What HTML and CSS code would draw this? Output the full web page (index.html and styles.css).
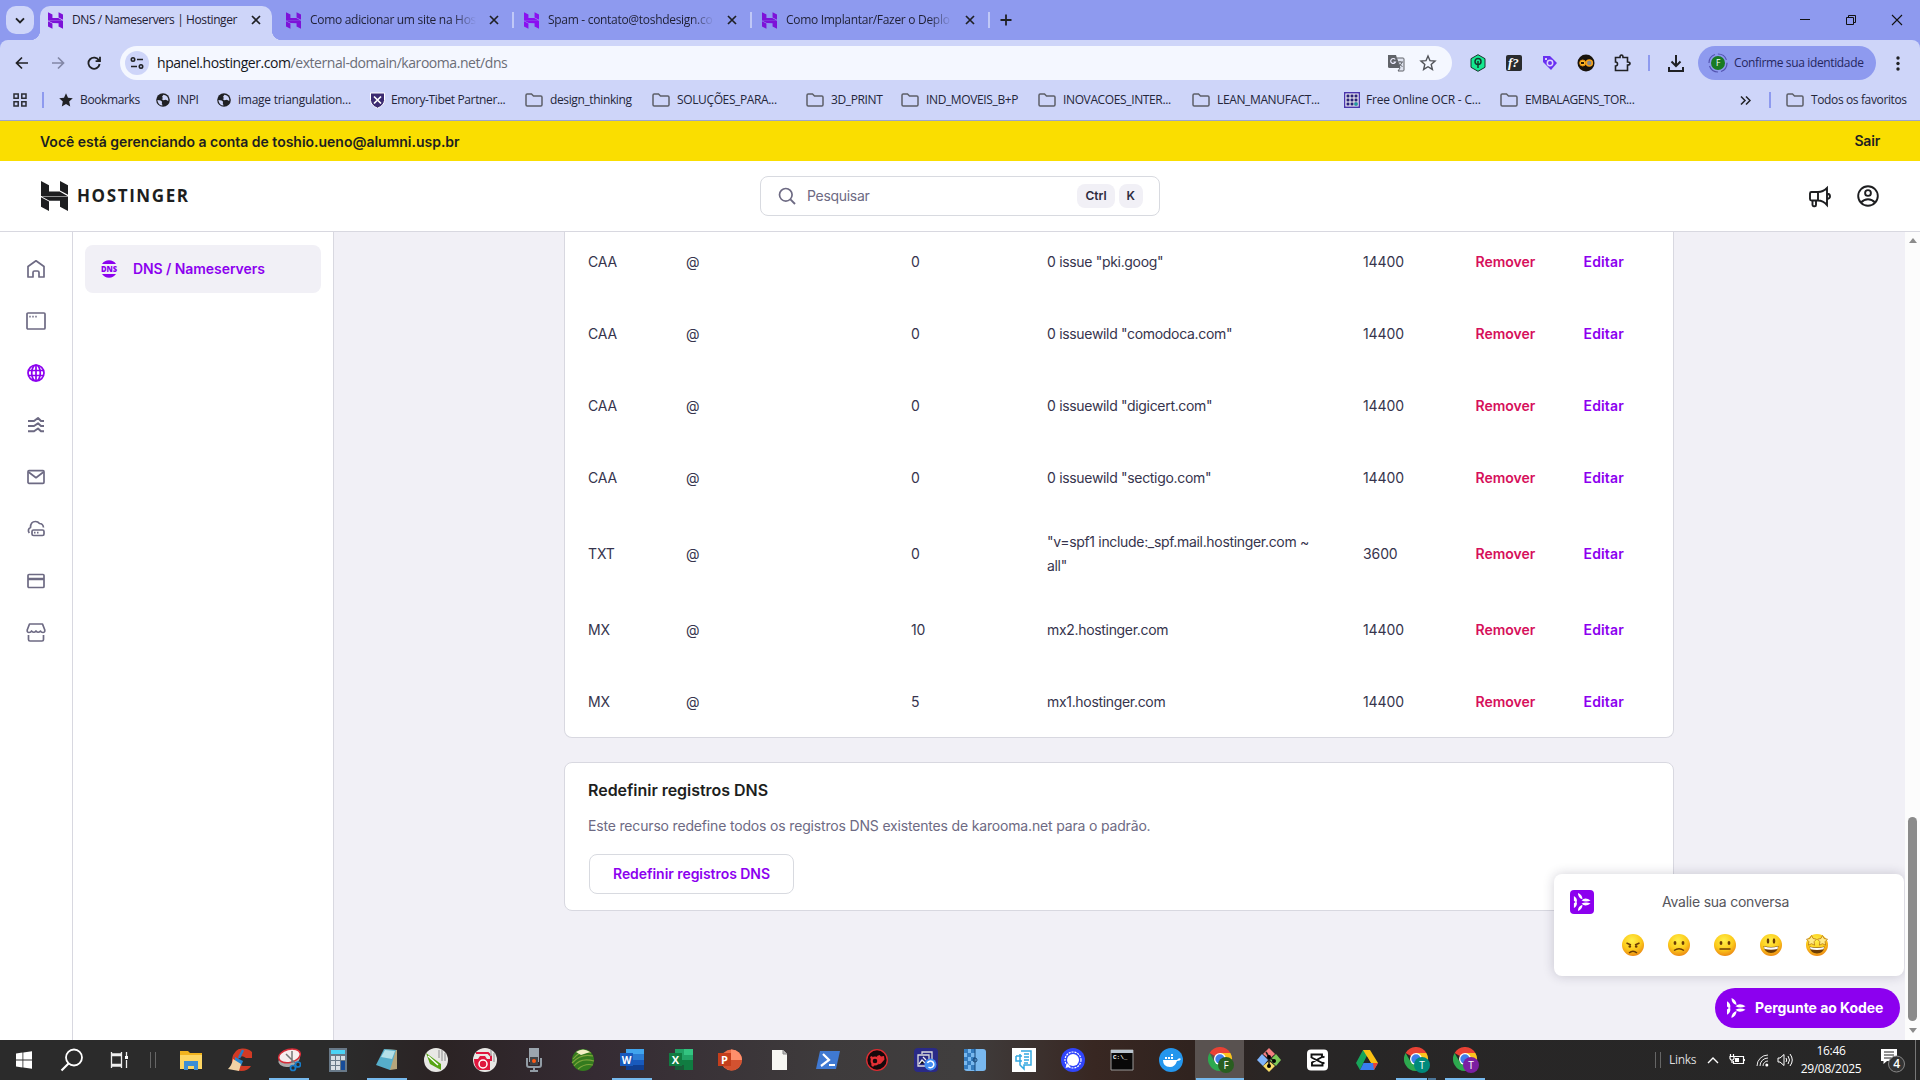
FILE: index.html
```html
<!DOCTYPE html>
<html lang="pt-BR">
<head>
<meta charset="utf-8">
<title>DNS / Nameservers | Hostinger</title>
<link rel="stylesheet" href="styles.css">
</head>
<body>
<svg class="defs" aria-hidden="true">
  <symbol id="h" viewBox="0 0 27 30"><path d="M0 0 8 4.3V10.500L18.600 10.600 26.500 15H0ZM19 0l8 4.300v9.500l-8-4.400ZM0 16.200l8 4.300V30l-8-4.300ZM.5 15.500H27V30l-8-4.300V19.800L8.400 19.700Z" fill="currentColor"/></symbol>
  <symbol id="x" viewBox="0 0 10 10"><path d="m1 1 8 8M9 1 1 9" stroke="#1f2024" stroke-width="1.700"/></symbol>
  <symbol id="folder" viewBox="0 0 18 14"><path d="M1 2.200Q1 1 2.200 1H6.500l2 2h7.300Q17 3 17 4.200v7.600Q17 13 15.800 13H2.200Q1 13 1 11.800Z" fill="none" stroke="#5d5f68" stroke-width="1.500"/></symbol>
  <symbol id="globe" viewBox="0 0 15 15"><circle cx="7.500" cy="7.500" r="7.300" fill="#202124"/><path d="M1.500 7.500 5 8l1.500 1.500-.3 1.500.8 2.500Q2 13.200 1.500 7.500ZM8 1.800 6.500 4l1 1.500-1.500 1L8 7.800l2.500-.5L13.200 8.500Q13.700 3 8 1.800Z" fill="#ced5f9"/></symbol>
  <symbol id="kodee" viewBox="0 0 20 20"><path d="M1 3.200Q5 5.500 4.300 9.700L2.800 10 1 8.500ZM1 16.800Q5 14.500 4.300 10.300L2.800 10 1 11.500ZM5.500 0Q10.500 2 10.500 7 5.500 5.500 5.500 0ZM5.500 20Q10.500 18 10.500 13 5.500 14.500 5.500 20ZM9.500 8.300Q13.500 4 19.500 8.300 14.500 10.800 9.500 8.300ZM9.500 11.700Q13.500 16 19.500 11.700 14.500 9.200 9.500 11.700Z" fill="#fff"/></symbol>
  <symbol id="chrome" viewBox="0 0 26 26"><path d="M12 12 1.600 6A12 12 0 0 1 22.400 6H12Z" fill="#e94235"/><path d="M12 12V6h10.400A12 12 0 0 1 12 24l5.200-9Z" fill="#fcc31e"/><path d="m12 12 5.200 3L12 24A12 12 0 0 1 1.600 6l5.200 9Z" fill="#2da94f"/><circle cx="12" cy="12" r="6" fill="#fff"/><circle cx="12" cy="12" r="4.700" fill="#3f7eea"/></symbol>
  <radialGradient id="face" cx=".45" cy=".3" r=".7"><stop offset="0" stop-color="#fff04a"/><stop offset=".6" stop-color="#fccb1b"/><stop offset="1" stop-color="#ec8a14"/></radialGradient>
</svg>

<div class="tabs">
  <button class="tabsearch"><svg width="10" height="7" viewBox="0 0 10 7"><path d="m1 1.300 4 4 4-4" fill="none" stroke="#202124" stroke-width="1.900"/></svg></button>
  <div class="tab active"><svg class="fav"><use href="#h"/></svg><span>DNS / Nameservers | Hostinger</span><svg class="close"><use href="#x"/></svg></div>
  <div class="tab"><svg class="fav"><use href="#h"/></svg><span>Como adicionar um site na Hos</span><svg class="close"><use href="#x"/></svg></div>
  <div class="tab"><svg class="fav bright"><use href="#h"/></svg><span>Spam - contato@toshdesign.co</span><svg class="close"><use href="#x"/></svg></div>
  <div class="tab"><svg class="fav"><use href="#h"/></svg><span>Como Implantar/Fazer o Deplo</span><svg class="close"><use href="#x"/></svg></div>
  <svg class="plus" width="12" height="12" viewBox="0 0 12 12"><path d="M6 .5v11M.5 6h11" stroke="#202124" stroke-width="1.800"/></svg>
  <div class="winbtns">
    <svg viewBox="0 0 12 12"><path d="M1 5.500h10" stroke="#111"/></svg>
    <svg viewBox="0 0 12 12"><path d="M1.500 3.500h7v7h-7ZM3.500 3V1.500h7v7H9" fill="none" stroke="#111"/></svg>
    <svg viewBox="0 0 12 12"><path d="m1 1 10 10M11 1 1 11" stroke="#111" stroke-width="1.100"/></svg>
  </div>
</div>

<div class="toolbar">
  <div class="nav">
    <svg viewBox="0 0 14 14"><path d="M13 7H1.500M7 1.500 1.500 7 7 12.500" fill="none" stroke="#202124" stroke-width="1.700"/></svg>
    <svg viewBox="0 0 14 14"><path d="M1 7h11.500M7 1.500 12.500 7 7 12.500" fill="none" stroke="#8287a6" stroke-width="1.700"/></svg>
    <svg viewBox="0 0 14 14"><path d="M12 4.500A5.600 5.600 0 1 0 12.600 8M13 .8v4.400H8.600" fill="none" stroke="#202124" stroke-width="1.800"/></svg>
  </div>
  <div class="omni">
    <span class="site"><svg width="14" height="14" viewBox="0 0 14 14"><g fill="none" stroke="#202124" stroke-width="1.600"><circle cx="3" cy="3.500" r="1.700"/><path d="M7 3.500h6M1 10.500h6"/><circle cx="11" cy="10.500" r="1.700"/></g></svg></span>
    <span class="url">hpanel.hostinger.com<i>/external-domain/karooma.net/dns</i></span>
    <svg class="omic" width="18" height="18" viewBox="0 0 18 18"><path d="M1 1h8l4 13H2.500Q1 14 1 12.500Z" fill="#606369"/><path d="M9.500 4H16q1 0 1 1v11q0 1-1 1h-5l2-3Z" fill="#dfe3ef" stroke="#606369"/><path d="M8.200 5.500A2.500 2.500 0 1 0 8.500 8H6.500" fill="none" stroke="#eef" stroke-width="1.200"/><path d="M11 8h5M13 7v1M15 8q-.5 3-3.500 4M12 9.500q1 2 3.500 3" fill="none" stroke="#606369"/></svg>
    <svg class="omic" width="18" height="18" viewBox="0 0 18 18"><path d="m9 2 2 4.700 5 .4-3.800 3.300 1.200 5L9 12.700l-4.400 2.700 1.200-5L2 7.100l5-.4Z" fill="none" stroke="#505258" stroke-width="1.400"/></svg>
  </div>
  <div class="exts">
    <svg viewBox="0 0 18 18"><path d="m9 .7 7 4v8.600l-7 4-7-4V4.700Z" fill="#14e990" stroke="#17352c"/><circle cx="9" cy="7.500" r="3" fill="none" stroke="#133b2d" stroke-width="1.500"/><path d="M9 7v7" stroke="#133b2d" stroke-width="1.500"/></svg>
    <svg viewBox="0 0 18 18"><rect x="1" y="1" width="16" height="16" rx="2" fill="#292b2e"/><text x="3" y="13" font-family="Liberation Serif,serif" font-style="italic" font-weight="700" font-size="13" fill="#fff">f?</text></svg>
    <svg viewBox="0 0 18 18"><path d="M2 2h7l7 7-6 7-2-2-6-6Z" fill="#6930f2"/><circle cx="9" cy="9" r="2.700" fill="none" stroke="#dcd2ff" stroke-width="1.500"/><circle cx="5" cy="5" r="1" fill="#fff"/></svg>
    <svg viewBox="0 0 18 18"><circle cx="9" cy="9" r="8.500" fill="#18130c"/><circle cx="5.700" cy="9" r="3" fill="#fbbd29" stroke="#e78b0b"/><circle cx="12.300" cy="9" r="3" fill="#888" stroke="#f5a31a" stroke-width="1.500"/><path d="M4 8h3v2H4" fill="#2a1805"/></svg>
    <svg viewBox="0 0 18 18"><path d="M2.500 3.500H7Q7 1 8.500 1T10 3.500h4.500V8q2.500 0 2.500 1.500T14.500 11v5.500h-12V12q2 0 2-2t-2-2Z" fill="none" stroke="#202124" stroke-width="1.600"/></svg>
  </div>
  <i class="vsep"></i>
  <svg class="dl" width="16" height="17" viewBox="0 0 16 17"><path d="M8 0v11M3.500 6.500 8 11l4.500-4.500M1 12v4h14v-4" fill="none" stroke="#202124" stroke-width="2"/></svg>
  <div class="profile"><svg width="20" height="20" viewBox="0 0 20 20"><circle cx="10" cy="10" r="9" fill="none" stroke="#5354b0" stroke-width="1.200" stroke-dasharray="11 3"/><circle cx="10" cy="10" r="7" fill="#187b22"/><text x="10" y="13" text-anchor="middle" font-size="8.500" font-family="Open Sans,sans-serif" fill="#fff">F</text></svg><span>Confirme sua identidade</span></div>
  <svg class="kebab" width="4" height="15" viewBox="0 0 4 15"><g fill="#202124"><circle cx="2" cy="2" r="1.700"/><circle cx="2" cy="7.500" r="1.700"/><circle cx="2" cy="13" r="1.700"/></g></svg>
</div>

<div class="bookmarks">
  <svg class="grid4" width="14" height="14" viewBox="0 0 14 14"><path d="M1 1h4.200v4.200H1ZM8.800 1H13v4.200H8.800ZM1 8.800h4.200V13H1ZM8.800 8.800H13V13H8.800Z" fill="none" stroke="#2b2d33" stroke-width="1.500"/></svg>
  <i class="vsep"></i>
  <a class="bm b1"><svg viewBox="0 0 14 14"><path d="m7 .3 2 4.500 4.800.5-3.600 3.300 1 4.900L7 11l-4.200 2.500 1-4.900L.2 5.300 5 4.800Z" fill="#202124"/></svg>Bookmarks</a>
  <a class="bm b2"><svg><use href="#globe"/></svg>INPI</a>
  <a class="bm b3"><svg><use href="#globe"/></svg>image triangulation...</a>
  <a class="bm b4"><svg viewBox="0 0 15 16"><path d="M.5.500h14V8Q14 13 7.500 15.700 1 13 .5 8Z" fill="#3c2b71" stroke="#fff"/><path d="m4 4 7 7M11 4l-7 7" stroke="#fff" stroke-width="1.700"/></svg>Emory-Tibet Partner...</a>
  <a class="bm b5"><svg class="f"><use href="#folder"/></svg>design_thinking</a>
  <a class="bm b6"><svg class="f"><use href="#folder"/></svg>SOLUÇÕES_PARA...</a>
  <a class="bm b7"><svg class="f"><use href="#folder"/></svg>3D_PRINT</a>
  <a class="bm b8"><svg class="f"><use href="#folder"/></svg>IND_MOVEIS_B+P</a>
  <a class="bm b9"><svg class="f"><use href="#folder"/></svg>INOVACOES_INTER...</a>
  <a class="bm b10"><svg class="f"><use href="#folder"/></svg>LEAN_MANUFACT...</a>
  <a class="bm b11"><svg class="ocr" viewBox="0 0 16 16"><path d="M.7.700h14.600v14.600H.7Z" fill="#fff" stroke="#4a35ad" stroke-width="1.400"/><path d="M2.500 4h11M2.500 8h11M2.500 12h11" stroke="#292176" stroke-width="3" stroke-dasharray="3 1"/><path d="M10.500 10.500h3v3h-3Z" fill="#1a9fa0"/></svg>Free Online OCR - C...</a>
  <a class="bm b12"><svg class="f"><use href="#folder"/></svg>EMBALAGENS_TOR...</a>
  <svg class="more" width="11" height="9" viewBox="0 0 11 9"><path d="m1 .5 4 4-4 4M6 .5l4 4-4 4" fill="none" stroke="#202124" stroke-width="1.500"/></svg>
  <i class="vsep"></i>
  <a class="bm all"><svg class="f"><use href="#folder"/></svg>Todos os favoritos</a>
</div>

<div class="notice"><b class="n1">Você está gerenciando a conta de toshio.ueno@alumni.usp.br</b><b class="n2">Sair</b></div>

<header class="header">
  <div class="brand"><svg width="27" height="30"><use href="#h"/></svg><span>HOSTINGER</span></div>
  <div class="search"><svg width="18" height="18" viewBox="0 0 18 18"><circle cx="7.800" cy="7.800" r="6.300" fill="none" stroke="#6d6a83" stroke-width="1.700"/><path d="m12.400 12.400 4.600 4.600" stroke="#6d6a83" stroke-width="1.900"/></svg><span>Pesquisar</span><kbd>Ctrl</kbd><kbd>K</kbd></div>
  <div class="actions">
    <svg width="24" height="24" viewBox="0 0 24 24"><path d="M3.500 8H10q5 0 9-4v17q-4-4.500-9-4.500H3.500Q2 16.500 2 15V9.500Q2 8 3.500 8ZM10 8v8.500M4.500 16.500V21q0 1.200 1.200 1.200h1q1.300 0 1.300-1.300v-4.400M19 9.800q3 0 3 2.500T19 15" fill="none" stroke="#1d1e20" stroke-width="1.900"/></svg>
    <svg width="24" height="24" viewBox="0 0 24 24"><g fill="none" stroke="#1d1e20" stroke-width="1.900"><circle cx="12" cy="12" r="9.800"/><circle cx="12" cy="9" r="2.900"/><path d="M5 18.500q3-3.300 7-3.300t7 3.300"/></g></svg>
  </div>
</header>

<div class="main">
  <nav class="rail">
    <svg viewBox="0 0 20 20"><path d="M2 7.500 10 1.800l8 5.700V18h-5v-4.500Q13 12 11.500 12h-3Q7 12 7 13.500V18H2Z"/></svg>
    <svg viewBox="0 0 20 20"><rect x="1" y="2" width="18" height="16" rx="1"/><path d="M3.300 5.700h1.400M6.300 5.700h1.400M9.300 5.700h1.400"/></svg>
    <svg class="on" viewBox="0 0 20 20"><circle cx="10" cy="10" r="8"/><ellipse cx="10" cy="10" rx="4.300" ry="8"/><path d="M10 2v16M2.500 7.500h15M2.500 12.500h15"/></svg>
    <svg class="thick" viewBox="0 0 20 20"><path d="M2 6h6l4-3 3 3h3M2 11h6l4-2.700 3 2.700h3M2 16.300h6l4-2.800 3 2.800h3"/></svg>
    <svg viewBox="0 0 20 20"><rect x="2" y="3.700" width="16" height="12.600" rx="1"/><path d="m2.500 5 7.500 5.700L17.500 5"/></svg>
    <svg viewBox="0 0 20 20"><path d="M3.300 14Q1 10.500 4.500 8.500 4.500 2.500 9.500 2.500q2.500 0 4 2 3.500 0 4 4"/><rect x="6" y="11" width="12" height="5.500" rx="1.500"/><path d="M8 13.700h1.500M11 13.700h1.500"/></svg>
    <svg viewBox="0 0 20 20"><rect x="2" y="3.500" width="16" height="13" rx="1"/><path d="M2 8h16" stroke-width="2.500"/></svg>
    <svg viewBox="0 0 20 20"><path d="M3.500 1h13l2.300 6Q19 9.500 17 9.500t-2.500-1.500Q12 10.500 10 8 8 10.500 5.500 8 5 9.500 3 9.500T1.200 7ZM2.500 12V16.500q0 1.500 1.500 1.500h12q1.500 0 1.500-1.500v-4.500"/></svg>
  </nav>
  <aside class="side"><a><svg width="18" height="18" viewBox="0 0 18 18"><path d="M2 4Q4.500.300 9 .300T16 4ZM2 14q2.500 3.700 7 3.700T16 14Z" fill="#8c00ef"/><text x="1" y="11.900" font-family="Open Sans,sans-serif" font-size="7.800" font-weight="800" textLength="16" lengthAdjust="spacingAndGlyphs" fill="#8c00ef">DNS</text></svg><span>DNS / Nameservers</span></a></aside>
  <div class="content">
    <section class="records">
      <div class="row"><span>CAA</span><span>@</span><span>0</span><span>0 issue "pki.goog"</span><span>14400</span><b class="del">Remover</b><b class="edit">Editar</b></div>
      <div class="row"><span>CAA</span><span>@</span><span>0</span><span>0 issuewild "comodoca.com"</span><span>14400</span><b class="del">Remover</b><b class="edit">Editar</b></div>
      <div class="row"><span>CAA</span><span>@</span><span>0</span><span>0 issuewild "digicert.com"</span><span>14400</span><b class="del">Remover</b><b class="edit">Editar</b></div>
      <div class="row"><span>CAA</span><span>@</span><span>0</span><span>0 issuewild "sectigo.com"</span><span>14400</span><b class="del">Remover</b><b class="edit">Editar</b></div>
      <div class="row tall"><span>TXT</span><span>@</span><span>0</span><span>"v=spf1 include:_spf.mail.hostinger.com ~<br>all"</span><span>3600</span><b class="del">Remover</b><b class="edit">Editar</b></div>
      <div class="row"><span>MX</span><span>@</span><span>10</span><span>mx2.hostinger.com</span><span>14400</span><b class="del">Remover</b><b class="edit">Editar</b></div>
      <div class="row"><span>MX</span><span>@</span><span>5</span><span>mx1.hostinger.com</span><span>14400</span><b class="del">Remover</b><b class="edit">Editar</b></div>
    </section>
    <section class="reset">
      <h2>Redefinir registros DNS</h2>
      <p>Este recurso redefine todos os registros DNS existentes de karooma.net para o padrão.</p>
      <button>Redefinir registros DNS</button>
    </section>
    <div class="rate">
      <div class="rhead"><span class="kicon"><svg width="18" height="18"><use href="#kodee"/></svg></span><span class="rtxt">Avalie sua conversa</span></div>
      <div class="faces">
        <svg viewBox="0 0 24 24"><circle cx="12" cy="12" r="11" fill="url(#face)"/><path d="m5.500 10 4.500 2M18.500 10 14 12M8 20q4-3.500 8 0" fill="none" stroke="#6b3c05" stroke-width="1.400"/><circle cx="8.800" cy="13.500" r="1.300" fill="#6b3c05"/><circle cx="15.200" cy="13.500" r="1.300" fill="#6b3c05"/></svg>
        <svg viewBox="0 0 24 24"><circle cx="12" cy="12" r="11" fill="url(#face)"/><ellipse cx="8" cy="10" rx="1.400" ry="2" fill="#6b3c05"/><ellipse cx="16" cy="10" rx="1.400" ry="2" fill="#6b3c05"/><path d="M7 17.500q5-3.500 10 0" fill="none" stroke="#6b3c05" stroke-width="1.400"/></svg>
        <svg viewBox="0 0 24 24"><circle cx="12" cy="12" r="11" fill="url(#face)"/><ellipse cx="8" cy="10" rx="1.400" ry="2" fill="#6b3c05"/><ellipse cx="16" cy="10" rx="1.400" ry="2" fill="#6b3c05"/><path d="M6.500 16h11" stroke="#6b3c05" stroke-width="1.500"/></svg>
        <svg viewBox="0 0 24 24"><circle cx="12" cy="12" r="11" fill="url(#face)"/><ellipse cx="9" cy="8" rx="1.300" ry="2.800" fill="#6b3c05"/><ellipse cx="15" cy="8" rx="1.300" ry="2.800" fill="#6b3c05"/><path d="M4.500 13q7.500 2 15 0-1 7-7.500 7t-7.500-7Z" fill="#6b3c05"/><path d="M5 13.500q7 2 14 0L18.500 16q-6.500 1.500-13 0Z" fill="#fff"/></svg>
        <svg viewBox="0 0 24 24"><circle cx="12" cy="12" r="11" fill="url(#face)"/><path d="m6.500 2.500 1.600 3 3.400.7-2.400 2.500.5 3.500-3.100-1.500-3.100 1.500.5-3.500L1.500 6.200l3.400-.7ZM17.500 2.500l1.600 3 3.400.7-2.400 2.500.5 3.500-3.100-1.500-3.100 1.500.5-3.500-2.400-2.500 3.400-.7Z" fill="#ffeb8a" stroke="#b9780f" stroke-width=".8"/><path d="M4.500 13.500q7.500 2 15 0-1 7-7.500 7t-7.500-7Z" fill="#6b3c05"/><path d="M5 14q7 2 14 0l-.5 2.300q-6.500 1.500-13 0Z" fill="#fff"/></svg>
      </div>
    </div>
    <button class="ask"><svg width="20" height="20"><use href="#kodee"/></svg><span>Pergunte ao Kodee</span></button>
  </div>
  <div class="scroll"><i class="up"></i><i class="thumb"></i><i class="down"></i></div>
</div>

<footer class="taskbar">
  <div class="sys"><svg viewBox="0 0 24 24"><path d="m4 5.500 6.500-1v7H4ZM11.300 4.400 20 3.200v8.300h-8.700ZM4 12.400h6.500v7L4 18.500ZM11.300 12.400H20v8.300l-8.700-1.200Z" fill="#fff"/></svg></div>
  <div class="sys"><svg viewBox="0 0 24 24"><circle cx="14" cy="9.500" r="8" fill="none" stroke="#fff" stroke-width="1.800"/><path d="m8.500 15.500-7 7" stroke="#fff" stroke-width="2.200"/></svg></div>
  <div class="sys"><svg viewBox="0 0 24 24"><path d="M3.500 7.500h10v9h-10ZM3.500 4v2h10V4M3.500 20v-2h10v2M18.500 4v4M18.500 12v8" fill="none" stroke="#eee" stroke-width="1.300"/><path d="M17 8h3v3h-3Z" fill="#fff"/></svg></div>
  <div class="grip"></div>
  <div class="app"><svg viewBox="0 0 24 24"><path d="M1 3h8l2 2h12v16H1Z" fill="#f1b31e"/><path d="M1 7h22v14H1Z" fill="#fdd663"/><path d="M5 13h14v9h-4v-4H9v4H5Z" fill="#3d8ed5"/></svg></div>
  <div class="app"><svg viewBox="0 0 24 24"><path d="M24 4v6h-6q-5-4-7.500 1-1.500 6 4.500 7h8q-3 5-10 5Q3 22 4 11 6 1 14 .500q6-.5 10 3.500Z" fill="#d23a24"/><path d="m15 2-4 8" stroke="#2a7bc4" stroke-width="2.500"/><path d="m7 9 8 4-2 5H7Z" fill="#2785cf"/><path d="m5 11 8 5-2 7-11-2q4-4 5-10Z" fill="#f0d3a5"/></svg></div>
  <div class="app run"><svg viewBox="0 0 24 24"><ellipse cx="12" cy="11.500" rx="11" ry="7" fill="#aaa" transform="rotate(-18 12 11)"/><ellipse cx="12.500" cy="8" rx="11" ry="6.500" fill="#f6eeee" stroke="#d72d38" stroke-width="1.500" transform="rotate(-14 12 8)"/><path d="m9 6 9 9M15 3v12" stroke="#777" stroke-width="1.500"/><g fill="none" stroke="#177dca" stroke-width="1.700"><circle cx="16" cy="20" r="2.500"/><circle cx="21" cy="16.500" r="2.500"/></g></svg></div>
  <div class="app"><svg viewBox="0 0 24 24"><path d="M3 0h18v24H3Z" fill="#687988"/><path d="M5 2h14v4H5Z" fill="#4bd3f5"/><path d="M5 8h4v4H5ZM10 8h4v4h-4ZM15 8h4v4h-4ZM5 13h4v4H5ZM10 13h4v4h-4ZM5 18h4v4H5ZM10 18h4v4h-4Z" fill="#d8dfe5"/><path d="M15 13h4v9h-4Z" fill="#164c99"/></svg></div>
  <div class="app run"><svg viewBox="0 0 24 24"><path d="m9 1 13 1v19l-7 1Z" fill="#b5a57c"/><path d="m9 1 12 1-6 20L1 17Z" fill="#56aeca"/><path d="m10 2 10 1-3 8-11-2Z" fill="#b4e0e8"/></svg></div>
  <div class="app"><svg viewBox="0 0 24 24"><circle cx="12" cy="12" r="12" fill="#e8e8e5"/><path d="m2 5 15 11v6L6 16Z" fill="#57a514"/><path d="m4 8 10 9" stroke="#fff" stroke-width="1.500"/><path d="M15 2v8M18 2v11M21 5v8" stroke="#aaa" stroke-width="1.500"/></svg></div>
  <div class="app"><svg viewBox="0 0 24 24"><circle cx="12" cy="12" r="12" fill="#e8e8e5"/><path d="M1 11h4l2-3h5l2 3h3v11H6Q1 19 1 11Z" fill="#df173e"/><circle cx="10" cy="16" r="4" fill="none" stroke="#fff" stroke-width="1.500"/><path d="M3 5h12l3 3v5" fill="none" stroke="#df173e" stroke-width="2"/><path d="M18 2v6M21 5v9" stroke="#aaa" stroke-width="1.500"/></svg></div>
  <div class="app"><svg viewBox="0 0 24 24"><path d="M7 0h10v14H7Z" fill="#9ba5ae"/><path d="M5 10v7q0 2 2 2h10q2 0 2-2v-7M12 19v4M8 23h8" fill="none" stroke="#929ca5" stroke-width="2"/><path d="M8 9h8v8H8Z" fill="#414447"/><circle cx="12" cy="13" r="2" fill="#ff5b16"/></svg></div>
  <div class="app"><svg viewBox="0 0 24 24"><circle cx="12" cy="12" r="11" fill="#347b1e"/><path d="M2 11Q10 1 20 5M1 15Q10 5 22 8M3 18q7-9 20-5M7 21q7-6 15-4" fill="none" stroke="#7fa53d" stroke-width="1.200"/><path d="M5 4q7-5 14 0l-9 3Z" fill="#f3f0c6"/></svg></div>
  <div class="app run"><svg viewBox="0 0 24 24"><path d="M6 1h18v6H6Z" fill="#41a5ee"/><path d="M6 6h18v6H6Z" fill="#2b7cd3"/><path d="M6 12h18v5H6Z" fill="#185abd"/><path d="M6 17h18v5H6Z" fill="#103f91"/><path d="M0 5h13v13H0Z" fill="#185abd"/><text x="6.500" y="15.500" text-anchor="middle" font-family="Open Sans,sans-serif" font-weight="700" font-size="10" fill="#fff">W</text></svg></div>
  <div class="app"><svg viewBox="0 0 24 24"><path d="M6 1h18v21H6Z" fill="#21a366"/><path d="M15 1h9v6h-9Z" fill="#33c481"/><path d="M6 12h18v10H6Z" fill="#107c41"/><path d="M6 17h9v5H6Z" fill="#185c37"/><path d="M0 5h13v13H0Z" fill="#107c41"/><text x="6.500" y="15.500" text-anchor="middle" font-family="Open Sans,sans-serif" font-weight="700" font-size="11" fill="#fff">X</text></svg></div>
  <div class="app"><svg viewBox="0 0 24 24"><circle cx="13.500" cy="12" r="10.500" fill="#ed6c47"/><path d="M13 1.500A10.500 10.500 0 0 1 24 12H13Z" fill="#ff8f6b"/><path d="M3 12h21Q23 22 13 22.500 4 21 3 12Z" fill="#d35230"/><path d="M0 5h13v13H0Z" fill="#c43e1c"/><text x="6.500" y="15.500" text-anchor="middle" font-family="Open Sans,sans-serif" font-weight="700" font-size="11" fill="#fff">P</text></svg></div>
  <div class="app"><svg viewBox="0 0 24 24"><path d="M5 2h11l4 4v16H5Z" fill="#f7f7f3"/><path d="M16 2v4h4" fill="#bbb" stroke="#888"/></svg></div>
  <div class="app"><svg viewBox="0 0 24 24"><path d="M4 3h20l-4 18H0Z" fill="#3f79d2"/><path d="m7 6 6 6-8 6M13 17h6" fill="none" stroke="#fff" stroke-width="2.200"/></svg></div>
  <div class="app"><svg viewBox="0 0 24 24"><circle cx="12" cy="12" r="10.300" fill="#16090b" stroke="#df2c31" stroke-width="1.300"/><circle cx="10" cy="13" r="3.400" fill="none" stroke="#e53035" stroke-width="2.200"/><path d="m12 8 2.500-1 1.500 1.500 3-.5.500 3.500-3.500 4-2.500 1ZM5 9l2-1 1 2-2 1.500ZM6 17l1.500-2 2 2-1.500 2Z" fill="#e53035"/></svg></div>
  <div class="app"><svg viewBox="0 0 24 24"><rect width="24" height="24" rx="4" fill="#2a2a87"/><path d="M8 6V4h10v9M4 7h11v11H4Z" fill="none" stroke="#ddd" stroke-width="1.300"/><path d="m5 16 3-4 3 3M9 9l3 3" stroke="#eee" stroke-width="1.300"/><circle cx="16.500" cy="16.500" r="6" fill="#428df2"/><path d="M13.500 15a3.300 3.300 0 1 1 1 4" fill="none" stroke="#fff" stroke-width="1.500"/></svg></div>
  <div class="app"><svg viewBox="0 0 24 24"><rect x="1" y="1" width="22" height="22" rx="3" fill="#78b8ef"/><path d="M1 1h4v4H1ZM8 1h4v4H8ZM4 5h4v4H4ZM1 9h4v4H1ZM8 9h4v4H8ZM4 13h4v4H4ZM1 17h4v4H1ZM8 17h4v5H8Z" fill="#357dc0"/><path d="M12 0v24" stroke="#174779"/><circle cx="12" cy="12" r="2" fill="none" stroke="#174779"/></svg></div>
  <div class="app"><svg viewBox="0 0 24 24"><path d="M0 0h24v24H0Z" fill="#fff"/><path d="M9 3h10v14h-7v4l-4-4V6M4 8h6M4 8v5h6M12 6h5M12 9h5M12 12h5M12 15h4" fill="none" stroke="#33a8e1" stroke-width="1.500"/></svg></div>
  <div class="app"><svg viewBox="0 0 24 24"><circle cx="12" cy="12" r="12" fill="#3045fb"/><circle cx="12" cy="12" r="6" fill="#fff"/><circle cx="12" cy="12" r="8" fill="none" stroke="#fff" stroke-width="1.200" stroke-dasharray="2 1"/><path d="m6 15-1.500 5 5-1.500Z" fill="#fff"/></svg></div>
  <div class="app"><svg viewBox="0 0 24 24"><path d="M1 2h22v20H1Z" fill="#080808" stroke="#999"/><path d="M1 2h22v3H1Z" fill="#b9c4ce"/><text x="3" y="11" font-family="Liberation Mono,monospace" font-weight="700" font-size="6" fill="#fff">C:\_</text></svg></div>
  <div class="app"><svg viewBox="0 0 24 24"><circle cx="12" cy="12" r="12" fill="#2496ed"/><path d="M4 12h14q2-3 4-1-1 2-4 2-2 6-7 6-7 0-7-7ZM6 9h2v2H6ZM9 9h2v2H9ZM12 9h2v2h-2ZM12 6h2v2h-2Z" fill="#fff"/></svg></div>
  <div class="app run current"><svg class="ch" viewBox="0 0 26 26"><use href="#chrome"/><circle cx="18" cy="18" r="8" fill="#295e20"/><text x="18" y="21.500" text-anchor="middle" font-family="Open Sans,sans-serif" font-size="10" fill="#fff">F</text></svg></div>
  <div class="app"><svg viewBox="0 0 24 24"><path d="m12 0 6 6-6 5-6-5Z" fill="#f27e80"/><path d="m5 6 6 6-5 6-6-6Z" fill="#81b4fa"/><path d="m19 6 5 6-5 6-6-6Z" fill="#7cc957"/><path d="m12 13 6 5-6 6-6-6Z" fill="#f8dc69"/><path d="m9 4 3 5v9M12 9l5 4" fill="none" stroke="#222" stroke-width="1.600"/><circle cx="12" cy="9" r="2"/><circle cx="17" cy="13" r="2"/><circle cx="12" cy="18" r="2"/></svg></div>
  <div class="app"><svg viewBox="0 0 24 24"><rect x="1" y="1.500" width="21" height="21" rx="4" fill="#fff"/><path d="M5.500 10V6.500H16V9L6 14.500v3h10.500V15L5.500 9.500M16.500 9.500l2-1M16.500 14.500l2 1" fill="none" stroke="#111" stroke-width="1.900"/></svg></div>
  <div class="app"><svg viewBox="0 0 24 24"><path d="M8 2h7l-3.500 6.500L5 22 1 15Z" fill="#17a55a"/><path d="M8 2h7l8 13h-7Z" fill="#fbc113"/><path d="M8.500 15H23l-4 7H5Z" fill="#397ef0"/><path d="M18 15h5l-4 7Z" fill="#ea4335"/><path d="m12 9 3.500 6h-7Z" fill="#272727"/></svg></div>
  <div class="app run multi"><svg class="ch" viewBox="0 0 26 26"><use href="#chrome"/><circle cx="18" cy="18" r="8" fill="#00897b"/><text x="18" y="21.500" text-anchor="middle" font-family="Open Sans,sans-serif" font-size="10" fill="#fff">T</text></svg></div>
  <div class="app run"><svg class="ch" viewBox="0 0 26 26"><use href="#chrome"/><circle cx="18" cy="18" r="8" fill="#7b1fa2"/><text x="18" y="21.500" text-anchor="middle" font-family="Open Sans,sans-serif" font-size="10" fill="#fff">T</text></svg></div>
  <div class="tray">
    <i class="grip2"></i><span class="links">Links</span>
    <svg class="t1" width="12" height="8" viewBox="0 0 12 8"><path d="m1 7 5-5 5 5" fill="none" stroke="#fff" stroke-width="1.400"/></svg>
    <svg class="t2" width="16" height="12" viewBox="0 0 16 12"><path d="M5 2.500h9.500v7H4.500V7M1.500 0v2M4.500 0v2M1 2.500h4v2l-1 1.500H2L1 4.500ZM3 6v3" fill="none" stroke="#fff" stroke-width="1.200"/><path d="M6 4h4v4H6ZM15 5h1v2h-1Z" fill="#fff"/></svg>
    <svg class="t3" width="13" height="13" viewBox="0 0 13 13"><g fill="none" stroke="#eee"><path d="M1 12A11 11 0 0 1 12 1M4 12a8 8 0 0 1 8-8M7 12a5 5 0 0 1 5-5"/></g><circle cx="10.800" cy="11" r="1.500" fill="#fff"/></svg>
    <svg class="t4" width="16" height="14" viewBox="0 0 16 14"><path d="M1 5h2l4-3.500v11L3 9H1ZM9 5q1.500 2 0 4M11 3q3 4 0 8M13 1q4.500 6 0 12" fill="none" stroke="#fff"/></svg>
    <div class="clock"><span>16:46</span><span class="date">29/08/2025</span></div>
    <svg class="t5" width="25" height="26" viewBox="0 0 25 26"><path d="M0 2h16v12H6l-3.500 3V14H0Z" fill="#fff"/><path d="M3 5h10M3 8h10M3 11h7" stroke="#222"/><circle cx="15.500" cy="17" r="8" fill="#333" stroke="#888"/><text x="15.500" y="21" text-anchor="middle" font-family="Open Sans,sans-serif" font-weight="600" font-size="12" fill="#fff">4</text></svg>
    <i class="peek"></i>
  </div>
</footer>
</body>
</html>
```
FILE: styles.css
```css
*{box-sizing:border-box}
body{margin:0;width:1920px;height:1080px;overflow:hidden;display:flex;flex-direction:column;background:#fff;font:400 14px/24px Inter,sans-serif;color:#36344d}
button{font:inherit;border:0;padding:0;margin:0}
svg{display:block;flex:none}
.defs{position:absolute;width:0;height:0}
.tabs,.toolbar,.bookmarks,.taskbar{font-family:"Open Sans",sans-serif}

.tabs{height:40px;flex:none;background:#8e9aef;display:flex;align-items:center;font-size:12px;color:#1f2034;padding-left:6px;position:relative;z-index:1}
.tabsearch{width:28px;height:28px;border-radius:10px;background:#ced5f9;display:grid;place-items:center;margin-right:6px}
.tab{width:238px;height:28px;display:flex;align-items:center;padding-left:8px;border-right:2px solid transparent;position:relative}
.tab span{width:168px;white-space:nowrap;margin-left:9px;letter-spacing:-.3px;-webkit-mask-image:linear-gradient(90deg,#000 85%,transparent 99%)}
.tab .fav{width:15px;height:17px;color:#7d12d8}
.tab .bright{color:#8a10f0}
.tab .close{width:10px;height:10px;margin-left:11px}
.tab:not(.active)::after{content:"";position:absolute;right:0;top:6px;width:2px;height:16px;background:#c0c8f7}
.tab:nth-child(3){margin-left:6px}
.tab.active{width:232px;height:34px;align-self:flex-end;background:#ced5f9;border-radius:10px 10px 0 0;border:0;padding-bottom:6px}
.tab.active span{-webkit-mask-image:none;letter-spacing:-.4px}
.tab.active::before,.tab.active::after{content:"";position:absolute;bottom:0;width:10px;height:10px}
.tab.active::before{left:-10px;background:radial-gradient(circle at 0 0,transparent 10px,#ced5f9 10.500px)}
.tab.active::after{right:-10px;background:radial-gradient(circle at 100% 0,transparent 10px,#ced5f9 10.500px)}
.plus{margin-left:8px}
.winbtns{margin-left:auto;display:flex;gap:34px;margin-right:17px}
.winbtns svg{width:12px;height:12px}

.toolbar{height:46px;flex:none;display:flex;align-items:center;background:#ced5f9;border-radius:8px 8px 0 0;box-shadow:0 -8px 0 0 #8e9aef}
.nav{width:120px;display:flex;gap:22px;padding-left:15px}
.nav svg{width:14px;height:14px}
.omni{width:1332px;height:34px;border-radius:17px;background:#f4f7ff;display:flex;align-items:center;padding-left:5px}
.site{width:24px;height:24px;border-radius:12px;background:#ced5f9;display:grid;place-items:center}
.url{flex:1;margin-left:8px;font-size:14px;letter-spacing:-.44px;color:#15161c;white-space:nowrap}
.url i{font-style:normal;color:#6b6d77}
.omic{margin-right:14px}
.omic+.omic{margin-right:15px}
.exts{display:flex;gap:18px;margin-left:17px}
.exts svg{width:18px;height:18px}
.vsep{width:2px;height:16px;background:#8e9aef;flex:none}
.exts+.vsep{margin-left:17px}
.dl{margin-left:18px}
.profile{width:178px;height:34px;border-radius:17px;background:#8e9aef;margin-left:14px;padding-left:10px;display:flex;align-items:center;gap:6px;font-size:12px;letter-spacing:-.36px;color:#25275f;white-space:nowrap}
.kebab{margin-left:20px}

.bookmarks{height:35px;flex:none;background:#ced5f9;border-bottom:1px solid #9ea5c8;display:flex;align-items:center;padding:0 0 6px 13px;font-size:12px;color:#24263a}
.bookmarks .grid4+.vsep{margin:0 15px 0 15px}
.bm{display:flex;align-items:center;white-space:nowrap;flex:none;letter-spacing:-.37px}
.bm svg{width:14px;height:14px;margin-right:7px}
.bm svg.f{width:18px;height:14px;margin-right:7px}
.bm svg.ocr{width:16px;height:16px;margin-right:6px}
.b4 svg{width:15px;height:17px;margin-right:6px}
.b1{width:97px}.b2{width:61px}.b3{width:153px;letter-spacing:-.25px}.b4{width:155px}.b5{width:127px}.b6{width:154px}.b7{width:95px}.b8{width:137px}.b9{width:154px}.b10{width:152px}.b11{width:156px;letter-spacing:-.2px}.b12{width:240px}
.more{margin-right:18px}
.all{margin-left:15px}

.notice{height:40px;flex:none;background:#fade00;display:flex;align-items:center;justify-content:space-between;padding:0 40px;color:#1d1e20}
.notice b{font-weight:600;letter-spacing:-.01px}
.n1{padding-top:1px}
.notice .n2{letter-spacing:-.2px}
.header{height:71px;flex:none;border-bottom:1px solid #d8d8e0;display:grid;grid-template-columns:1fr 400px 1fr;align-items:center;padding:0 40px}
.brand{display:flex;align-items:center;gap:9px;color:#1d1e20;padding-left:1px}
.brand span{font:700 17px/24px "Open Sans",sans-serif;letter-spacing:1.600px}
.search{height:40px;border:1px solid #d8dae0;border-radius:8px;display:flex;align-items:center;padding:0 16px 0 17px;color:#6d6a83}
.search span{flex:1;margin-left:11px;letter-spacing:-.3px}
kbd{height:24px;padding:0 8px;border-radius:8px;background:#f1f0f6;font:600 12px/24px Inter,sans-serif;color:#2d2b40;margin-left:4px}
.actions{display:flex;justify-content:flex-end;gap:24px}

.main{flex:1;min-height:0;display:flex}
.rail{width:73px;border-right:1px solid #d8d8e0;display:flex;flex-direction:column;align-items:center;gap:32px;padding-top:27px}
.rail svg{width:20px;height:20px;fill:none;stroke:#6d6a83;stroke-width:1.700;stroke-linejoin:round}
.rail .on{stroke:#8c00ef}
.rail .thick{stroke-width:2}
.side{width:261px;border-right:1px solid #d8d8e0;padding:13px 12px}
.side a{height:48px;border-radius:8px;background:#f1f0f6;display:flex;align-items:center;padding-left:15px;gap:15px;color:#8c00ef;font-weight:600;letter-spacing:-.07px}
.content{flex:1;background:#f1f0f6;position:relative;padding-left:230px;overflow:hidden}
.records{width:1110px;height:506px;border:1px solid #d8d8e0;border-top:0;border-radius:0 0 8px 8px;background:#fff;display:flex;flex-direction:column;justify-content:flex-end;overflow:hidden}
.row{height:72px;flex:none;display:grid;grid-template-columns:98px 225px 136px 316px 112px 108px 1fr;align-items:center;padding:1px 0 0 23px}
.row.tall{height:80px}
.row span{letter-spacing:-.1px}
.row span:nth-child(4){letter-spacing:-.32px}
.row b{font-weight:600;padding-left:.5px}
.del{color:#d6105b}
.row .edit{color:#8c00ef;letter-spacing:.15px}
.reset{width:1110px;height:149px;margin-top:24px;border:1px solid #d8d8e0;border-radius:8px;background:#fff;padding:15px 23px}
.reset h2{margin:0 0 12px;font-size:16px;line-height:24px;font-weight:600;color:#1d1e20;letter-spacing:-.03px}
.reset p{margin:0 0 16px;color:#6d6a83;letter-spacing:-.17px}
.reset button{display:block;margin-left:1px;width:205px;height:40px;border:1px solid #d8dae0;border-radius:8px;background:#fff;color:#8c00ef;font-weight:600;letter-spacing:-.05px}
.rate{position:absolute;right:1px;top:642px;width:350px;height:102px;border-radius:8px;background:#fff;box-shadow:0 0 12px rgba(30,25,60,.2);padding:16px}
.rhead{display:flex}
.kicon{width:24px;height:24px;border-radius:4px;background:#8c00ef;display:grid;place-items:center}
.rtxt{margin-left:68px;color:#56565c;letter-spacing:-.23px}
.faces{display:flex;gap:22px;margin:19px 0 0 51px}
.faces svg{width:24px;height:24px}
.ask{position:absolute;right:5px;top:756px;width:185px;height:40px;border-radius:20px;background:#8c00ef;color:#fff;font-weight:700;letter-spacing:-.05px;display:flex;align-items:center;padding-left:11px;gap:9px;white-space:nowrap}
.scroll{width:15px;background:#fcfcfc;display:flex;flex-direction:column;align-items:center}
.up,.down{border:4.500px solid transparent;border-top:0;border-bottom:5px solid #8b8b8b;margin-top:6px}
.thumb{width:9px;height:204px;border-radius:5px;background:#8b8b8b;margin-top:574px}
.down{transform:rotate(180deg);margin-top:7px}

.taskbar{height:40px;flex:none;display:flex;background:linear-gradient(90deg,#2b2b2b 0,#2b2b2b 18%,#2b2324 23%,#352b33 31%,#3e3b3c 43%,#403e3e 50%,#382722 57%,#30231f 62%,#282626 67%,#272727 100%);color:#fff}
.sys{width:48px;display:grid;place-items:center}
.sys svg{width:24px;height:24px}
.grip{width:22px;display:flex}
.grip::after,.grip2::after{content:"";width:4px;height:16px;border:solid #666;border-width:0 1px;margin:12px 0 0 6px}
.app{width:49px;display:grid;place-items:center;flex:none}
.app svg{width:24px;height:24px}
.app svg.ch{width:26px;height:26px;margin-left:2px}
.run{background:linear-gradient(#76b9ed,#76b9ed) center bottom/40px 2px no-repeat}
.current{background:linear-gradient(#76b9ed,#76b9ed) center bottom/48px 2px no-repeat,#595250}
.multi{background:linear-gradient(90deg,#76b9ed 31px,#222 31px,#222 32px,#4c779a 32px) center bottom/40px 2px no-repeat}
.tray{margin-left:auto;display:flex;align-items:center;font-size:12px;letter-spacing:-.3px;height:40px;width:264px}
.grip2{width:13px;height:40px;display:flex}
.grip2::after{margin-left:-1px}
.links{width:38px;color:#ddd}
.t2{margin-left:10px}.t3{margin-left:11px}.t4{margin-left:8px}
.clock{width:72px;margin-left:2px;display:flex;flex-direction:column;line-height:18px;text-align:center}
.t5{margin-left:14px}
.peek{width:1px;height:40px;background:#777;margin-left:auto;margin-right:4px}
```
